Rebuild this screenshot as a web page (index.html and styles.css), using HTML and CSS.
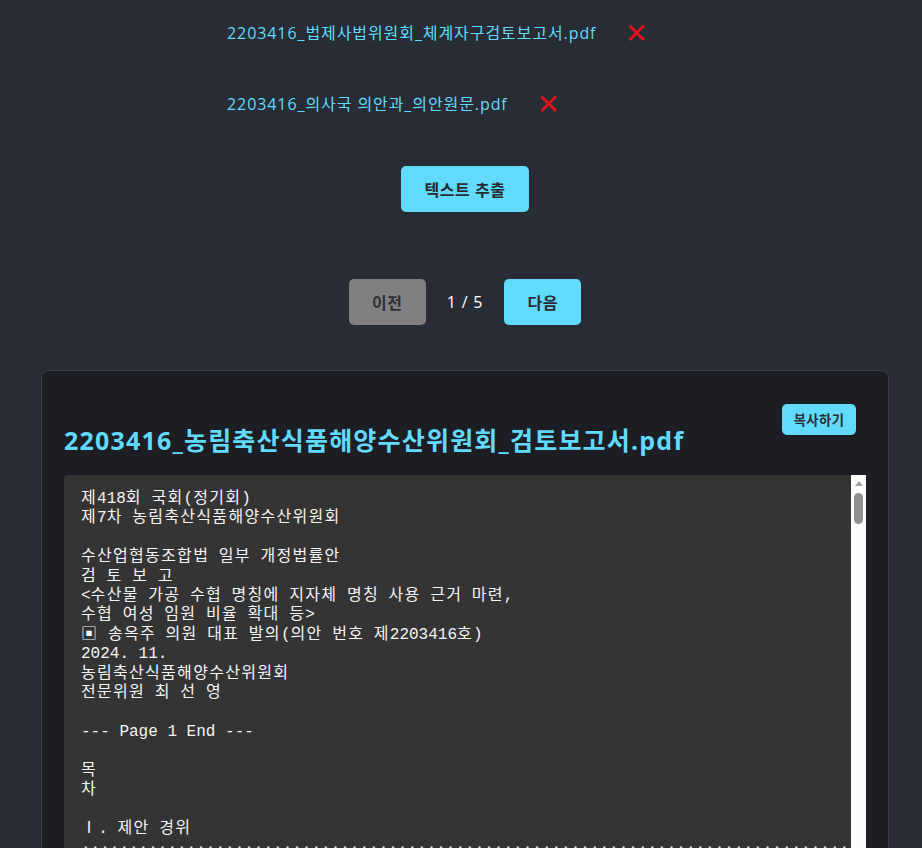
FILE: index.html
```html
<!DOCTYPE html>
<html lang="ko">
<head>
<meta charset="utf-8">
<title>PDF 텍스트 추출</title>
<link rel="stylesheet" href="styles.css">
</head>
<body>
<div class="app">
  <ul class="file-list">
    <li class="file-item">
      <span class="file-name">2203416_법제사법위원회_체계자구검토보고서.pdf</span>
      <button class="remove-btn" aria-label="삭제"><svg width="16" height="16" viewBox="0 0 16 16"><path d="M1.5 1.5 L14 14 M14 1.5 L1.5 14" stroke="#e8121e" stroke-width="2.8" stroke-linecap="square" fill="none"/></svg></button>
    </li>
    <li class="file-item">
      <span class="file-name">2203416_의사국 의안과_의안원문.pdf</span>
      <button class="remove-btn" aria-label="삭제"><svg width="16" height="16" viewBox="0 0 16 16"><path d="M1.5 1.5 L14 14 M14 1.5 L1.5 14" stroke="#e8121e" stroke-width="2.8" stroke-linecap="square" fill="none"/></svg></button>
    </li>
  </ul>

  <div class="actions">
    <button class="btn btn-primary btn-extract">텍스트 추출</button>
  </div>

  <div class="pagination">
    <button class="btn btn-disabled">이전</button>
    <span class="page-info">1 / 5</span>
    <button class="btn btn-primary">다음</button>
  </div>

  <section class="card">
    <div class="card-header">
      <h2 class="card-title">2203416_농림축산식품해양수산위원회_검토보고서.pdf</h2>
      <button class="copy-btn">복사하기</button>
    </div>
    <div class="text-box">
      <div class="text-content"><span class="ko">제</span>418<span class="ko">회 국회</span>(<span class="ko">정기회</span>)
<span class="ko">제</span>7<span class="ko">차 농림축산식품해양수산위원회</span>

<span class="ko">수산업협동조합법 일부 개정법률안</span>
<span class="ko">검 토 보 고</span>
&lt;<span class="ko">수산물 가공 수협 명칭에 지자체 명칭 사용 근거 마련</span>,
<span class="ko">수협 여성 임원 비율 확대 등</span>&gt;
<span class="ko">▣ 송옥주 의원 대표 발의</span>(<span class="ko">의안 번호 제</span>2203416<span class="ko">호</span>)
2024. 11.
<span class="ko">농림축산식품해양수산위원회</span>
<span class="ko">전문위원 최 선 영</span>

--- Page 1 End ---

<span class="ko">목</span>
<span class="ko">차</span>

<span class="ko">Ⅰ</span>. <span class="ko">제안 경위</span>
·······························································································</div>
      <div class="scrollbar">
        <span class="scroll-arrow"></span>
        <span class="scroll-thumb"></span>
      </div>
    </div>
  </section>
</div>
</body>
</html>
```
FILE: styles.css
```css
html, body {
  margin: 0;
  padding: 0;
  overflow: hidden;
  background: #282c34;
}

body {
  font-family: "Open Sans", "Noto Sans CJK KR", sans-serif;
  color: #ffffff;
}

.app {
  display: flex;
  flex-direction: column;
  padding: 0 33px 0 41px;
}

.file-list {
  list-style: none;
  width: 516px;
  margin: 8px auto 0;
  padding: 0 0 0 40px;
  display: flex;
  flex-direction: column;
  gap: 21px;
}

.file-item {
  height: 50px;
  display: flex;
  align-items: center;
}

.file-name {
  color: #61dafb;
  font-size: 16px;
  line-height: 22px;
  letter-spacing: 0.92px;
}

.remove-btn {
  margin-left: 33px;
  padding: 0;
  border: none;
  background: none;
  width: 16px;
  height: 16px;
  display: flex;
}

.actions {
  display: flex;
  justify-content: center;
  margin-top: 37px;
}

.btn {
  height: 46px;
  border: none;
  border-radius: 5px;
  font-family: "Open Sans", "Noto Sans CJK KR", sans-serif;
  font-size: 16px;
  font-weight: 700;
  color: #282c34;
  padding: 0 22px;
  letter-spacing: 0.5px;
}

.btn-extract {
  width: 128px;
  padding: 0;
}

.btn-primary {
  background: #61dafb;
}

.btn-disabled {
  background: #808080;
  color: #2d3036;
}

.pagination {
  display: flex;
  justify-content: center;
  align-items: center;
  margin-top: 67px;
}

.pagination .btn {
  width: 77px;
  padding: 0;
}

.page-info {
  margin: 0 21px 0 21px;
  font-size: 16px;
  letter-spacing: 0.8px;
  color: #ffffff;
}

.card {
  margin-top: 45px;
  background: #1c1e24;
  border: 1px solid #3b3e45;
  border-radius: 8px;
  padding: 0 22px 22px;
}

.card-header {
  display: flex;
  justify-content: space-between;
  align-items: flex-start;
  padding-top: 22px;
}

.card-title {
  margin: 31px 0 19px;
  font-size: 25px;
  line-height: 32px;
  font-weight: 700;
  letter-spacing: 1.2px;
  color: #61dafb;
}

.copy-btn {
  margin: 11px 10px 0 0;
  width: 74px;
  height: 31px;
  padding: 0;
  border: none;
  border-radius: 5px;
  background: #61dafb;
  color: #282c34;
  font-family: "Open Sans", "Noto Sans CJK KR", sans-serif;
  font-size: 13.33px;
  font-weight: 700;
  letter-spacing: 0.4px;
}

.text-box {
  display: flex;
  height: 480px;
  background: #343434;
  border-radius: 4px 0 0 4px;
  overflow: hidden;
}

.text-content {
  flex: 1;
  padding: 15px 16px 0 17px;
  white-space: pre-wrap;
  overflow: hidden;
  font-family: "Liberation Mono", "Noto Sans CJK KR", monospace;
  font-size: 16px;
  line-height: 19.4px;
  color: #f4f4f4;
}

.ko {
  letter-spacing: 1.3px;
  word-spacing: -1.3px;
}

.scrollbar {
  width: 15px;
  flex: none;
  background: #fcfcfc;
  display: flex;
  flex-direction: column;
  align-items: center;
}

.scroll-arrow {
  margin-top: 6px;
  width: 0;
  height: 0;
  border-left: 4.5px solid transparent;
  border-right: 4.5px solid transparent;
  border-bottom: 5px solid #a3a3a3;
}

.scroll-thumb {
  margin-top: 7px;
  width: 9px;
  height: 31px;
  border-radius: 5px;
  background: #8f8f8f;
}
```
